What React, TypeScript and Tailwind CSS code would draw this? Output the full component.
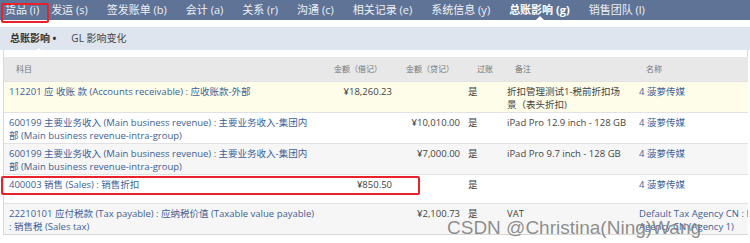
import React from "react";

const FONT = { fontFamily: '"Open Sans", "Noto Sans CJK SC", sans-serif' };

const tabs = [
  "货品 (i)",
  "发运 (s)",
  "签发账单 (b)",
  "会计 (a)",
  "关系 (r)",
  "沟通 (c)",
  "相关记录 (e)",
  "系统信息 (y)",
  "总账影响 (g)",
  "销售团队 (l)",
];

type Row = {
  account: string[];
  debit: string;
  credit: string;
  posted: string;
  memo: string;
  name: string[];
  bg: string;
  h: string;
  boxed?: boolean;
};

const rows: Row[] = [
  {
    account: ["112201 应 收账 款 (Accounts receivable) : 应收账款-外部"],
    debit: "¥18,260.23",
    credit: "",
    posted: "是",
    memo: "折扣管理测试1-税前折扣场景（表头折扣)",
    name: ["4 菠萝传媒"],
    bg: "bg-[#fdfdea]",
    h: "h-[31px]",
  },
  {
    account: [
      "600199 主要业务收入 (Main business revenue) : 主要业务收入-集团内",
      "部 (Main business revenue-intra-group)",
    ],
    debit: "",
    credit: "¥10,010.00",
    posted: "是",
    memo: "iPad Pro 12.9 inch - 128 GB",
    name: ["4 菠萝传媒"],
    bg: "bg-white",
    h: "h-[30px]",
  },
  {
    account: [
      "600199 主要业务收入 (Main business revenue) : 主要业务收入-集团内",
      "部 (Main business revenue-intra-group)",
    ],
    debit: "",
    credit: "¥7,000.00",
    posted: "是",
    memo: "iPad Pro 9.7 inch - 128 GB",
    name: ["4 菠萝传媒"],
    bg: "bg-[#f6f6f6]",
    h: "h-[30px]",
  },
  {
    account: ["400003 销售 (Sales) : 销售折扣"],
    debit: "¥850.50",
    credit: "",
    posted: "是",
    memo: "",
    name: ["4 菠萝传媒"],
    bg: "bg-white",
    h: "h-[29px]",
    boxed: true,
  },
  {
    account: [
      "22210101 应付税款 (Tax payable) : 应纳税价值 (Taxable value payable)",
      ": 销售税 (Sales tax)",
    ],
    debit: "",
    credit: "¥2,100.73",
    posted: "是",
    memo: "VAT",
    name: ["Default Tax Agency CN : Default", "Agency CN (Agency 1)"],
    bg: "bg-[#f6f6f6]",
    h: "h-[31px]",
  },
];

export default function App() {
  return (
    <div className="relative w-[750px] h-[243px] overflow-hidden bg-white" style={FONT}>
      {/* Top tab bar */}
      <div className="relative h-[20px] bg-[#5f7397] flex items-center pl-[5px] gap-[19px] text-[11px] text-[#eef1f6]">
        {tabs.map((t, i) => (
          <div
            key={t}
            className={
              "relative whitespace-nowrap leading-[20px] " +
              (i === 8 ? "font-bold text-white" : "") +
              (i === 0 ? " mr-[-7px]" : "")
            }
          >
            {t}
            {i === 8 && (
              <span className="absolute left-[27px] bottom-0 w-0 h-0 border-l-[4px] border-r-[4px] border-b-[4px] border-l-transparent border-r-transparent border-b-white" />
            )}
          </div>
        ))}
        {/* red highlight on first tab */}
        <div className="absolute left-[1px] top-[3px] w-[48px] h-[20px] border-2 border-[#e8222a] rounded-[2px]" />
      </div>

      {/* spacer */}
      <div className="h-[7px]" />

      {/* Sub tab bar */}
      <div className="relative h-[23px] bg-[#dfe5ee] flex items-center pl-[10px] text-[10px]">
        <div className="relative font-bold text-[#333] whitespace-nowrap">
          总账影响 •
          <span className="absolute left-[24px] top-[17px] w-0 h-0 border-l-[5px] border-r-[5px] border-b-[5px] border-l-transparent border-r-transparent border-b-white" />
        </div>
        <div className="ml-[15px] text-[#444] whitespace-nowrap">GL 影响变化</div>
      </div>

      {/* Table container */}
      <div className="ml-[3px] w-[745px] mt-0 border-l border-r border-b border-[#d8d8d8]">
        <div className="h-[7px] bg-white" />
        <table className="table-fixed border-collapse w-[744px]">
          <colgroup>
            <col className="w-[327px]" />
            <col className="w-[68px]" />
            <col className="w-[67px]" />
            <col className="w-[37px]" />
            <col className="w-[131px]" />
            <col className="w-[114px]" />
          </colgroup>
          <thead>
            <tr className="h-[24px] bg-[#e8e8e8] text-[8px] text-[#777] font-normal">
              <th className="text-left font-normal pl-[12px]">科目</th>
              <th className="text-left font-normal pl-[3px] whitespace-nowrap">金额（借记）</th>
              <th className="text-left font-normal pl-[7px] whitespace-nowrap">金额（贷记）</th>
              <th className="text-left font-normal pl-[11px]">过账</th>
              <th className="text-left font-normal pl-[12px]">备注</th>
              <th className="text-left font-normal pl-[12px]">名称</th>
            </tr>
          </thead>
          <tbody className="text-[9.5px] leading-[13.5px]">
            {rows.map((r, i) => (
              <tr key={i} className={`${r.bg} ${r.h} border-t border-[#e2e2e2] align-top`}>
                <td className="pl-[5px] pt-[3px] text-[#3d5f99] relative">
                  {r.account.map((l, j) => (
                    <div key={j} className="whitespace-nowrap">{l}</div>
                  ))}
                  {r.boxed && (
                    <div className="absolute left-[-3px] top-[1px] w-[419px] h-[19px] border-2 border-[#e8222a] rounded-[2px]" />
                  )}
                </td>
                <td className="pr-[7px] pt-[3px] text-right text-[#444] whitespace-nowrap">{r.debit}</td>
                <td className="pr-[6px] pt-[3px] text-right text-[#444] whitespace-nowrap">{r.credit}</td>
                <td className="pl-[2px] pt-[3px] text-[#444]">{r.posted}</td>
                <td className="pl-[4px] pr-[6px] pt-[3px] text-[#444]">{r.memo}</td>
                <td className="pl-[5px] pt-[3px] text-[#3d5f99] overflow-hidden">
                  {r.name.map((l, j) => (
                    <div key={j} className="whitespace-nowrap">{l}</div>
                  ))}
                </td>
              </tr>
            ))}
          </tbody>
        </table>
      </div>

      {/* Watermark */}
      <div
        className="absolute left-[447px] top-[214px] text-[19px] text-[#7a7a7a]/85 whitespace-nowrap pointer-events-none"
        style={{ fontFamily: '"Liberation Sans", Arial, sans-serif' }}
      >
        CSDN @Christina(Ning)Wang
      </div>
    </div>
  );
}
